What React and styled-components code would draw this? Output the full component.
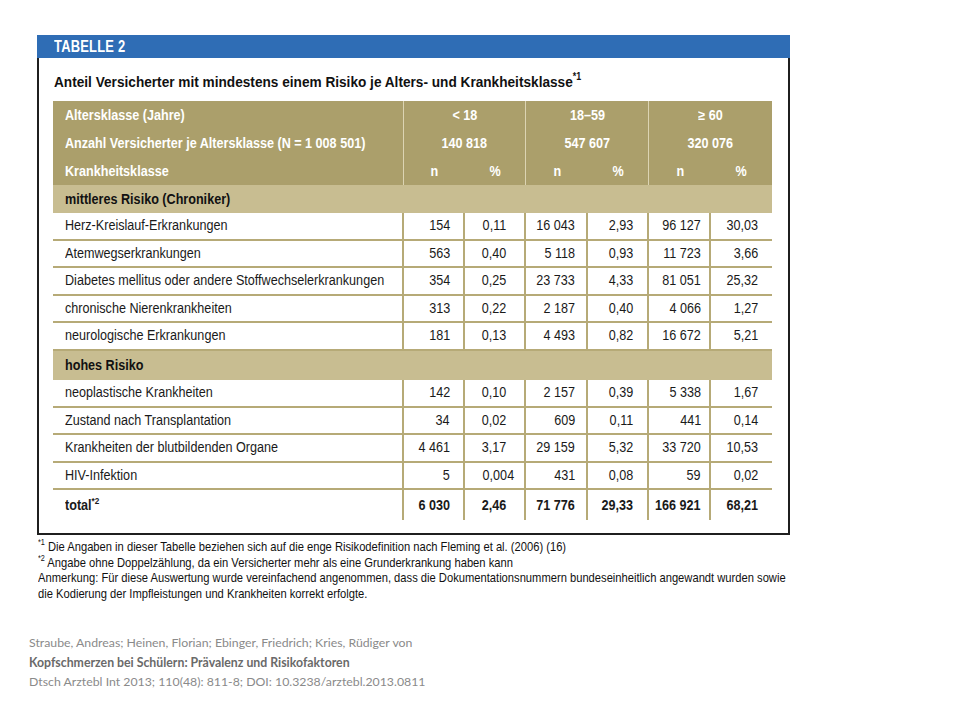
import React from 'react';
import styled, { createGlobalStyle } from 'styled-components';

const sans = `"Liberation Sans", Arial, sans-serif`;

const TAN = '#ab9f6b';
const BAND = '#c8bd91';
const LINE = '#b6aa77';

const GlobalStyle = createGlobalStyle`
  body {
    margin: 0;
    background: #ffffff;
    font-family: ${sans};
  }
`;

// the print layout uses a narrow grotesque; squeeze Arial metrics to match
const Cond = styled.span`
  display: inline-block;
  white-space: nowrap;
  transform: scaleX(${(p) => p.$x || 0.9});
  transform-origin: ${(p) => p.$origin || 'left'} center;
`;

const Page = styled.div`
  width: 960px;
  height: 720px;
  padding-top: 35px;
  box-sizing: border-box;
  background: #ffffff;
`;

const Box = styled.div`
  width: 753px;
  margin-left: 37px;
  box-sizing: border-box;
  border: 2px solid #1f1f1f;
  border-top: 0;
  padding-bottom: 13px;
`;

const TableBar = styled.div`
  margin: 0 -2px;
  height: 23px;
  line-height: 24px;
  padding-left: 17px;
  background: #2f6db5;
  color: #ffffff;
  font-weight: bold;
  font-size: 17px;
  letter-spacing: 0.3px;
`;

const Title = styled.div`
  padding: 14px 0 0 15px;
  margin-bottom: 9px;
  line-height: 20px;
  font-size: 15.5px;
  font-weight: bold;
  color: #111;
`;

const Sup = styled.sup`
  font-size: 0.65em;
  line-height: 0;
  position: relative;
  top: -0.1em;
`;

const Table = styled.table`
  margin-left: 14px;
  width: 719px;
  table-layout: fixed;
  border-collapse: separate;
  border-spacing: 0;
  font-size: 14px;
  color: #1a1a1a;
`;

const HeadCell = styled.th`
  background: ${TAN};
  color: #ffffff;
  font-weight: bold;
  line-height: 28px;
  padding: 0 ${(p) => (p.$label ? '12px' : '0')};
  text-align: ${(p) => (p.$label ? 'left' : 'center')};
  border-right: ${(p) => (p.$sep ? '1px solid #dcd4b3' : '0')};
  white-space: nowrap;
`;

const BandCell = styled.td`
  background: ${BAND};
  font-weight: bold;
  line-height: ${(p) => p.$h}px;
  padding: 0 12px;
  color: #111;
`;

const LabelCell = styled.td`
  line-height: ${(p) => (p.$total ? '30px' : '25.6px')};
  padding: 0 12px;
  border-right: 2px solid ${LINE};
  border-bottom: ${(p) => (p.$total ? '0' : `2px solid ${LINE}`)};
  font-weight: ${(p) => (p.$total ? 'bold' : 'normal')};
  white-space: nowrap;
`;

const NumCell = styled.td`
  line-height: ${(p) => (p.$total ? '30px' : '25.6px')};
  padding: 0 ${(p) => p.$pad}px 0 0;
  text-align: right;
  border-right: ${(p) => (p.$last ? '0' : `2px solid ${LINE}`)};
  border-bottom: ${(p) => (p.$total ? '0' : `2px solid ${LINE}`)};
  font-weight: ${(p) => (p.$total ? 'bold' : 'normal')};
  white-space: nowrap;
`;

const Overhang = styled.span`
  margin-right: -9px;
`;

const Notes = styled.div`
  margin: 4px 0 0 38px;
  font-size: 13px;
  line-height: 15.5px;
  color: #111;
`;

const NoteLine = styled.div`
  white-space: nowrap;
`;

const Citation = styled.div`
  margin: 32px 0 0 29px;
  font-family: Lato, "Open Sans", sans-serif;
  font-size: 12.3px;
  line-height: 19.5px;
  color: #8a8a8a;
`;

const CiteLine = styled.div`
  white-space: nowrap;
  font-weight: ${(p) => (p.$strong ? 'bold' : 'normal')};
  color: ${(p) => (p.$strong ? '#6a6a6a' : 'inherit')};
`;

const pads = [13, 18, 11, 14, 8, 14];

const groups = [
  {
    title: 'mittleres Risiko (Chroniker)',
    h: 28,
    rows: [
      ['Herz-Kreislauf-Erkrankungen', '154', '0,11', '16 043', '2,93', '96 127', '30,03'],
      ['Atemwegserkrankungen', '563', '0,40', '5 118', '0,93', '11 723', '3,66'],
      ['Diabetes mellitus oder andere Stoffwechselerkrankungen', '354', '0,25', '23 733', '4,33', '81 051', '25,32'],
      ['chronische Nierenkrankheiten', '313', '0,22', '2 187', '0,40', '4 066', '1,27'],
      ['neurologische Erkrankungen', '181', '0,13', '4 493', '0,82', '16 672', '5,21'],
    ],
  },
  {
    title: 'hohes Risiko',
    h: 29,
    rows: [
      ['neoplastische Krankheiten', '142', '0,10', '2 157', '0,39', '5 338', '1,67'],
      ['Zustand nach Transplantation', '34', '0,02', '609', '0,11', '441', '0,14'],
      ['Krankheiten der blutbildenden Organe', '4 461', '3,17', '29 159', '5,32', '33 720', '10,53'],
      ['HIV-Infektion', '5', '0,004', '431', '0,08', '59', '0,02'],
    ],
  },
];

const total = ['6 030', '2,46', '71 776', '29,33', '166 921', '68,21'];

const renderValue = (v) => {
  const [, dec] = v.split(',');
  if (dec && dec.length > 2) {
    return (
      <>
        {v.slice(0, -1)}
        <Overhang>{v.slice(-1)}</Overhang>
      </>
    );
  }
  return v;
};

const Values = ({ values, total: isTotal }) =>
  values.map((v, i) => (
    <NumCell key={i} $pad={pads[i]} $last={i === values.length - 1} $total={isTotal}>
      <Cond $origin="right">{renderValue(v)}</Cond>
    </NumCell>
  ));

const Head = ({ children, ...rest }) => (
  <HeadCell {...rest}>
    <Cond $origin={rest.$label ? 'left' : 'center'}>{children}</Cond>
  </HeadCell>
);

const App = () => (
  <Page>
    <GlobalStyle />
    <Box>
      <TableBar>
        <Cond $x={0.76}>TABELLE 2</Cond>
      </TableBar>
      <Title>
        <Cond $x={0.88}>
          Anteil Versicherter mit mindestens einem Risiko je Alters- und Krankheitsklasse
          <Sup>*1</Sup>
        </Cond>
      </Title>
      <Table>
        <colgroup>
          <col style={{ width: 351 }} />
          <col style={{ width: 61 }} />
          <col style={{ width: 61 }} />
          <col style={{ width: 62 }} />
          <col style={{ width: 61 }} />
          <col style={{ width: 62 }} />
          <col style={{ width: 61 }} />
        </colgroup>
        <thead>
          <tr>
            <Head $label $sep>Altersklasse (Jahre)</Head>
            <Head colSpan={2} $sep>&lt; 18</Head>
            <Head colSpan={2} $sep>18–59</Head>
            <Head colSpan={2}>≥ 60</Head>
          </tr>
          <tr>
            <Head $label $sep>Anzahl Versicherter je Altersklasse (N = 1 008 501)</Head>
            <Head colSpan={2} $sep>140 818</Head>
            <Head colSpan={2} $sep>547 607</Head>
            <Head colSpan={2}>320 076</Head>
          </tr>
          <tr>
            <Head $label $sep>Krankheitsklasse</Head>
            <Head>n</Head>
            <Head $sep>%</Head>
            <Head>n</Head>
            <Head $sep>%</Head>
            <Head>n</Head>
            <Head>%</Head>
          </tr>
        </thead>
        <tbody>
          {groups.map((g) => (
            <React.Fragment key={g.title}>
              <tr>
                <BandCell colSpan={7} $h={g.h}>
                  <Cond>{g.title}</Cond>
                </BandCell>
              </tr>
              {g.rows.map(([label, ...values]) => (
                <tr key={label}>
                  <LabelCell>
                    <Cond>{label}</Cond>
                  </LabelCell>
                  <Values values={values} />
                </tr>
              ))}
            </React.Fragment>
          ))}
          <tr>
            <LabelCell $total>
              <Cond>
                total<Sup>*2</Sup>
              </Cond>
            </LabelCell>
            <Values values={total} total />
          </tr>
        </tbody>
      </Table>
    </Box>
    <Notes>
      <NoteLine>
        <Cond $x={0.86}>
          <Sup>*1</Sup> Die Angaben in dieser Tabelle beziehen sich auf die enge Risikodefinition nach Fleming et al. (2006) (16)
        </Cond>
      </NoteLine>
      <NoteLine>
        <Cond $x={0.86}>
          <Sup>*2</Sup> Angabe ohne Doppelzählung, da ein Versicherter mehr als eine Grunderkrankung haben kann
        </Cond>
      </NoteLine>
      <NoteLine>
        <Cond $x={0.86}>
          Anmerkung: Für diese Auswertung wurde vereinfachend angenommen, dass die Dokumentationsnummern bundeseinheitlich angewandt wurden sowie
        </Cond>
      </NoteLine>
      <NoteLine>
        <Cond $x={0.86}>die Kodierung der Impfleistungen und Krankheiten korrekt erfolgte.</Cond>
      </NoteLine>
    </Notes>
    <Citation>
      <CiteLine>Straube, Andreas; Heinen, Florian; Ebinger, Friedrich; Kries, Rüdiger von</CiteLine>
      <CiteLine $strong>Kopfschmerzen bei Schülern: Prävalenz und Risikofaktoren</CiteLine>
      <CiteLine>Dtsch Arztebl Int 2013; 110(48): 811-8; DOI: 10.3238/arztebl.2013.0811</CiteLine>
    </Citation>
  </Page>
);

export default App;
